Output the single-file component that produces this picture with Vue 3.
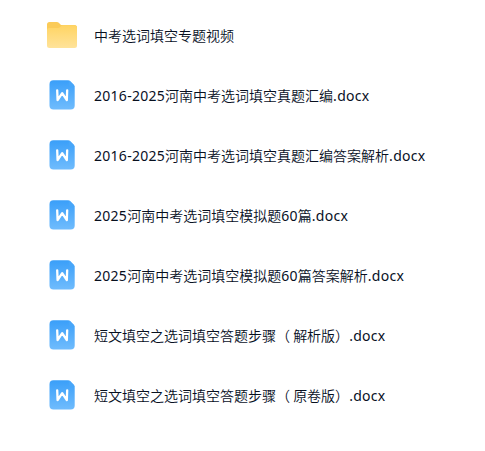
<script setup>
const files = [
  { type: 'folder', name: '中考选词填空专题视频' },
  { type: 'doc', name: '2016-2025河南中考选词填空真题汇编.docx' },
  { type: 'doc', name: '2016-2025河南中考选词填空真题汇编答案解析.docx' },
  { type: 'doc', name: '2025河南中考选词填空模拟题60篇.docx' },
  { type: 'doc', name: '2025河南中考选词填空模拟题60篇答案解析.docx' },
  { type: 'doc', name: '短文填空之选词填空答题步骤（ 解析版）.docx' },
  { type: 'doc', name: '短文填空之选词填空答题步骤（ 原卷版）.docx' },
]

// Split a name into Latin and Chinese runs so each gets its own tracking.
const runs = (name) => name.match(/[\x20-\x7e]+|[^\x20-\x7e]+/g)
</script>

<template>
  <ul class="files">
    <li v-for="file in files" :key="file.name" class="row">
      <svg v-if="file.type === 'folder'" class="icon" viewBox="0 0 32 32">
        <defs>
          <linearGradient id="folder" x1="0" y1="0" x2="0" y2="1">
            <stop offset="0" stop-color="#ffd463" />
            <stop offset="1" stop-color="#ffe39a" />
          </linearGradient>
        </defs>
        <path d="M1 5.500a2.500 2.500 0 0 1 2.500-2.500h7.300q1.200 0 2 .8L15 6H28.500a2.500 2.500 0 0 1 2.500 2.500V17H1z" fill="#fbcb58" />
        <path d="M1 11q0-2 2-2h9q1.200 0 2-.8l1-1q1-1 2.200-1H28.500q2.500 0 2.500 2.500V26.500a2.500 2.500 0 0 1-2.500 2.500h-25A2.500 2.500 0 0 1 1 26.500z" fill="url(#folder)" />
      </svg>
      <svg v-else class="icon" viewBox="0 0 32 32">
        <defs>
          <linearGradient id="doc" x1="0" y1="0" x2="0" y2="1">
            <stop offset="0" stop-color="#3a9ff9" />
            <stop offset="1" stop-color="#70bcfd" />
          </linearGradient>
        </defs>
        <path d="M7.500 1.300h14.200q1.500 0 2.500 1l3.500 3.500q1 1 1 2.500v18.300a4 4 0 0 1-4 4H7.500a4 4 0 0 1-4-4V5.300a4 4 0 0 1 4-4z" fill="url(#doc)" />
        <path d="M22.700 1.600v3.100a3 3 0 0 0 3 3h2.900q-.1-1.100-.9-1.900l-3.500-3.500q-.6-.6-1.500-.7z" fill="#48a6f9" />
        <path d="M11.200 11.300l.4 9.800L16.200 14.200l4.600 6.900.4-9.800" fill="none" stroke="#fff" stroke-width="2.300" stroke-linecap="round" stroke-linejoin="round" />
      </svg>
      <span class="name"><span v-for="(run, i) in runs(file.name)" :key="i" :class="{ latin: /[0-9a-z]/.test(run) }">{{ run }}</span></span>
    </li>
  </ul>
</template>

<style>
body {
  background: #fff;
}
</style>

<style scoped>
.files {
  box-sizing: border-box;
  margin: 0;
  padding: 5px 0 0 46px;
  list-style: none;
  font-family: "Noto Sans CJK SC", sans-serif;
  font-size: 14px;
  line-height: 20px;
  color: #08101f;
}
.row {
  display: flex;
  align-items: center;
  gap: 16px;
  height: 60px;
}
.icon {
  flex: none;
  width: 32px;
  height: 32px;
}
.name {
  white-space: pre;
  font-weight: 350;
}
.latin {
  font-family: "Noto Sans", sans-serif;
  font-weight: 400;
  letter-spacing: 0.28px;
}
</style>
